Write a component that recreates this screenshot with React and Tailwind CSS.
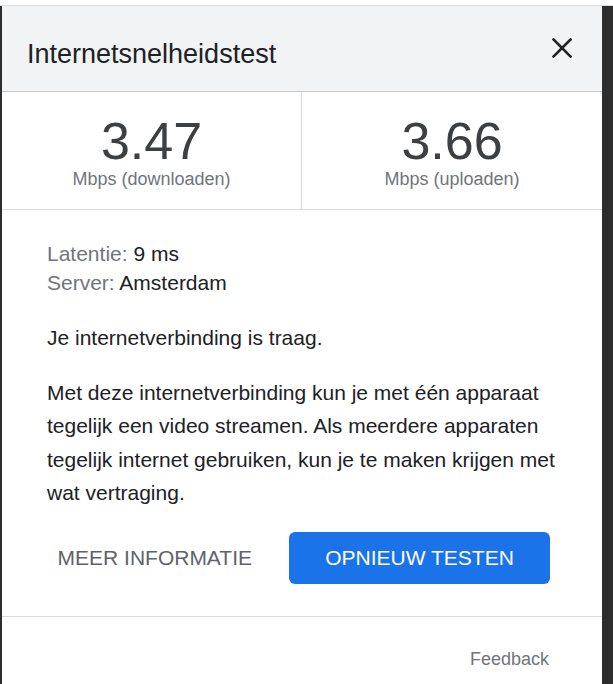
import React from "react";

export default function App() {
  return (
    <div className="w-[613px] h-[684px] overflow-hidden bg-[#2d2d2d] font-['Liberation_Sans',Arial,sans-serif] flex flex-col">
      <div className="h-[6px] bg-white border-b border-[#dcdcdc] shrink-0" />
      <div className="flex flex-1 min-h-0">
        <div className="w-[2px] shrink-0" />
        <div className="w-[600px] shrink-0 bg-white flex flex-col">
          {/* Header */}
          <div className="h-[86px] bg-[#f1f3f4] border-b border-[#c8c8c8] flex justify-between items-start shrink-0">
            <div className="ml-[25px] mt-[35px] text-[27px] leading-[27px] text-[#202124]">
              Internetsnelheidstest
            </div>
            <svg
              className="mt-[32px] mr-[30px]"
              width="20"
              height="20"
              viewBox="0 0 20 20"
              fill="none"
              stroke="#202124"
              strokeWidth="2.6"
              strokeLinecap="square"
            >
              <line x1="1.5" y1="1.5" x2="18.5" y2="18.5" />
              <line x1="18.5" y1="1.5" x2="1.5" y2="18.5" />
            </svg>
          </div>

          {/* Stats */}
          <div className="h-[118px] border-b border-[#dadce0] grid grid-cols-2 shrink-0">
            <div className="border-r border-[#dadce0] flex flex-col items-center pt-[23px]">
              <div className="text-[52px] leading-[52px] text-[#3c4043]">3.47</div>
              <div className="mt-[3px] text-[18px] leading-[18px] text-[#70757a]">Mbps (downloaden)</div>
            </div>
            <div className="flex flex-col items-center pt-[23px]">
              <div className="text-[52px] leading-[52px] text-[#3c4043]">3.66</div>
              <div className="mt-[3px] text-[18px] leading-[18px] text-[#70757a]">Mbps (uploaden)</div>
            </div>
          </div>

          {/* Content */}
          <div className="pl-[45px] pr-[28px] pt-[29px] text-[21px] text-[#202124] shrink-0">
            <div className="leading-[29px]">
              <div>
                <span className="text-[#70757a]">Latentie:</span> 9 ms
              </div>
              <div>
                <span className="text-[#70757a]">Server:</span> Amsterdam
              </div>
            </div>
            <div className="mt-[26px] leading-[29px]">Je internetverbinding is traag.</div>
            <div className="mt-[24px] leading-[33.3px]">
              Met deze internetverbinding kun je met één apparaat tegelijk een video streamen. Als meerdere apparaten tegelijk internet gebruiken, kun je te maken krijgen met wat vertraging.
            </div>
            <div className="mt-[23px] mr-[24px] flex justify-end items-center gap-[37px]">
              <span className="text-[21px] text-[#5f6368] uppercase">MEER INFORMATIE</span>
              <button className="w-[261px] h-[52px] rounded-[6px] bg-[#1a73e8] text-white text-[21px]">
                OPNIEUW TESTEN
              </button>
            </div>
          </div>

          <div className="mt-[32px] border-t border-[#dadce0] flex justify-end pr-[53px] pt-[30px] shrink-0">
            <span className="text-[18px] leading-[24px] text-[#70757a]">Feedback</span>
          </div>
        </div>
        <div className="flex-1" />
      </div>
    </div>
  );
}
